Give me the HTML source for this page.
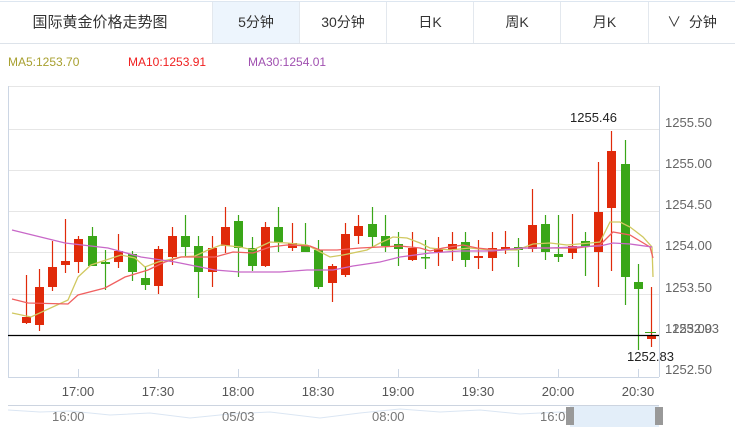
<!DOCTYPE html>
<html><head><meta charset="utf-8"><style>
body{margin:0;width:735px;height:427px;overflow:hidden;background:#fff;font-family:"Liberation Sans","Noto Sans CJK SC",sans-serif;}
.tabs{position:absolute;left:0;top:1px;width:735px;height:41px;border-top:1px solid #dde6f0;border-bottom:1px solid #dde3ea;display:flex;}
.tabs div{height:41px;line-height:41px;text-align:center;font-size:14px;color:#333;border-left:1px solid #e3e8ee;box-sizing:border-box;}
.tabs div.first{border-left:none;width:212px;padding-right:12px;font-size:15px}
</style></head><body>
<div class="tabs">
<div class="first">国际黄金价格走势图</div>
<div style="width:87px;background:#edf5fd">5分钟</div>
<div style="width:87px">30分钟</div>
<div style="width:87px">日K</div>
<div style="width:87px">周K</div>
<div style="width:88px">月K</div>
<div style="width:87px">&#8744;&nbsp; 分钟</div>
</div>
<svg width="735" height="427" style="position:absolute;left:0;top:0" font-family="Liberation Sans, sans-serif">
<text x="8" y="66" font-size="12" fill="#a8a030">MA5:1253.70</text>
<text x="128" y="66" font-size="12" fill="#f02020">MA10:1253.91</text>
<text x="248" y="66" font-size="12" fill="#a050b0">MA30:1254.01</text>
<g stroke="#e6e6e6" stroke-width="1">
<line x1="8" y1="86.5" x2="659" y2="86.5"/>
<line x1="8" y1="129.5" x2="659" y2="129.5"/>
<line x1="8" y1="170.5" x2="659" y2="170.5"/>
<line x1="8" y1="211.5" x2="659" y2="211.5"/>
<line x1="8" y1="252.5" x2="659" y2="252.5"/>
<line x1="8" y1="294.5" x2="659" y2="294.5"/>
</g>
<line x1="8.5" y1="86" x2="8.5" y2="377" stroke="#ccd6e4"/>
<line x1="659.5" y1="86" x2="659.5" y2="377" stroke="#ccd6e4"/>
<line x1="8" y1="377.5" x2="659" y2="377.5" stroke="#ccd6e4"/>
<g stroke="#ccd6e4"><line x1="78.5" y1="369" x2="78.5" y2="377"/><line x1="158.5" y1="369" x2="158.5" y2="377"/><line x1="238.5" y1="369" x2="238.5" y2="377"/><line x1="318.5" y1="369" x2="318.5" y2="377"/><line x1="398.5" y1="369" x2="398.5" y2="377"/><line x1="478.5" y1="369" x2="478.5" y2="377"/><line x1="558.5" y1="369" x2="558.5" y2="377"/><line x1="638.5" y1="369" x2="638.5" y2="377"/></g>
<g font-size="13" fill="#666">
<text x="665" y="127">1255.50</text><text x="665" y="168">1255.00</text><text x="665" y="209">1254.50</text><text x="665" y="250">1254.00</text><text x="665" y="292">1253.50</text><text x="665" y="333">1253.00</text><text x="672" y="333">1252.93</text><text x="665" y="374">1252.50</text>
</g>
<g font-size="13" fill="#555" text-anchor="middle">
<text x="78" y="396">17:00</text><text x="158" y="396">17:30</text><text x="238" y="396">18:00</text><text x="318" y="396">18:30</text><text x="398" y="396">19:00</text><text x="478" y="396">19:30</text><text x="558" y="396">20:00</text><text x="638" y="396">20:30</text>
</g>
<g id="c"></g>
<polyline fill="none" stroke="#d0c860" stroke-width="1.3" points="12,313 31,317 68,300 78,277 91,265 121,255 135,258 145,267 158,262 181,257 195,256 208,250 221,245 240,247 253,250 270,242 287,243 307,245 330,257 343,255 367,250 380,243 393,237 407,238 420,243 430,248 450,250 470,248 490,250 517,250 533,244 550,243 567,245 590,243 600,242 610,222 620,222 630,227 643,237 652,247 653,277"/>
<polyline fill="none" stroke="#f06060" stroke-width="1.3" points="12,299 28,303 68,304 78,295 105,288 125,277 148,270 165,262 181,257 215,257 233,252 253,253 270,247 287,245 310,246 320,250 337,250 360,248 380,247 400,246 420,248 430,251 443,248 463,245 477,248 497,250 523,248 550,248 577,248 600,245 613,232 630,235 650,247 653,258"/>
<polyline fill="none" stroke="#c868c8" stroke-width="1.3" points="12,230 65,243 108,248 141,257 175,262 215,270 240,272 280,272 307,270 333,270 353,266 380,262 400,257 430,253 460,251 493,251 523,248 550,248 600,246 613,243 630,244 652,247"/>
<line x1="8" y1="335.5" x2="659" y2="335.5" stroke="#000" stroke-width="1.2"/>
<line x1="645" y1="332.5" x2="656" y2="332.5" stroke="#3aa018"/>
<text x="570" y="122" font-size="13" fill="#222">1255.46</text>
<text x="627" y="361" font-size="13" fill="#222">1252.83</text>
<line x1="8" y1="405.5" x2="659" y2="405.5" stroke="#ccd4e0"/>
<polyline fill="none" stroke="#dbe6f3" points="8,410 40,412 70,411 110,415 150,413 190,418 230,414 270,412 320,418 360,413 400,409 440,412 480,410 520,414 560,412 600,413 640,412 659,411"/>
<rect x="570" y="406" width="89" height="21" fill="#e3eef9"/>
<rect x="566" y="407" width="8" height="18" fill="#999"/>
<rect x="655" y="407" width="8" height="18" fill="#999"/>
<g font-size="13" fill="#777"><text x="52" y="421">16:00</text><text x="222" y="421">05/03</text><text x="372" y="421">08:00</text><text x="540" y="421">16:0</text></g>
</svg>
<script>
var d=[
[25.5,275,324,317,323,1],[38.5,269,331,287,325,1],[52,241,291,267,287,1],[65,219,273,261,265,1],[78,236,273,239,262,1],[92,227,266,236,266,0],[105,250,290,262,264,0],[118,234,268,251,262,1],[132,251,281,254,272,0],[145,266,290,278,285,0],[158,246,294,249,286,1],[172,227,265,236,257,1],[185,215,257,236,247,0],[198,236,298,246,272,0],[212,236,287,248,272,1],[225,207,253,227,246,1],
[238,215,277,221,248,0],[252,237,271,248,266,0],[265,222,267,227,266,1],[278,207,252,227,242,0],[292,223,251,243,248,1],[305,223,252,246,252,0],[318,240,289,250,287,0],[332,264,302,266,283,1],[345,223,277,234,275,1],[358,215,244,226,236,1],[372,207,247,224,237,0],[385,215,252,236,246,0],[398,232,266,244,249,0],[412,232,261,248,260,1],
[425,240,269,257,258,0],[438,237,266,249,252,1],[452,232,261,244,250,1],[465,232,267,242,260,0],[478,240,269,256,258,1],[492,232,271,248,258,1],[505,231,254,247,250,1],[518,238,267,247,250,0],[532,189,252,225,249,1],[545,215,260,224,252,0],[558,215,262,254,257,0],[572,214,259,246,253,1],[585,232,276,241,247,0],
[598,162,287,212,252,1],[611,131,271,151,208,1],[625,140,305,164,277,0],[638,264,350,282,289,0],[651,287,347,336,339,1]];
var s='';d.forEach(function(c){var col=c[5]?'#e02a0a':'#3aa618';var x=Math.round(c[0]);
s+='<line x1="'+(x+0.5)+'" y1="'+c[1]+'" x2="'+(x+0.5)+'" y2="'+c[2]+'" stroke="'+col+'" stroke-width="1.2"/>';
s+='<rect x="'+(x-4)+'" y="'+c[3]+'" width="9" height="'+Math.max(1.5,c[4]-c[3])+'" fill="'+col+'"/>';});
document.getElementById('c').innerHTML=s;
</script>
</body></html>
